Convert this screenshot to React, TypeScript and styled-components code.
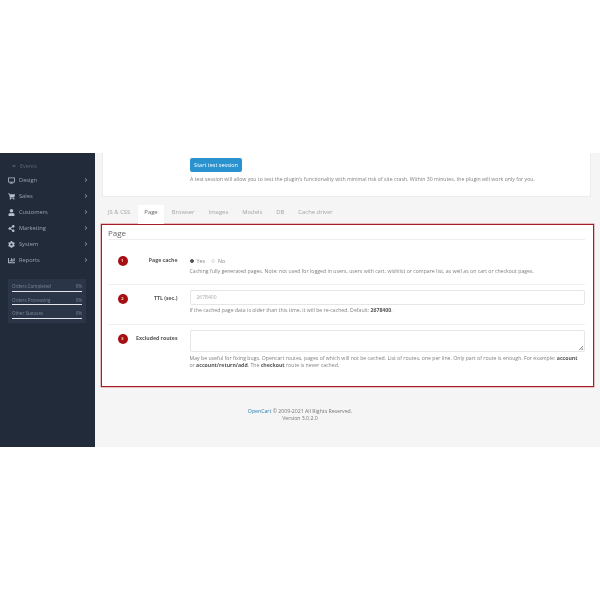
import React from 'react'
import styled, { createGlobalStyle } from 'styled-components'
import {
  FaAngleRight,
  FaAngleDoubleRight,
  FaDesktop,
  FaShoppingCart,
  FaUser,
  FaShareAlt,
  FaCog,
  FaChartBar,
} from 'react-icons/fa'

const GlobalStyle = createGlobalStyle`
  html, body {
    margin: 0;
    padding: 0;
    background: #fff;
    font-family: "Open Sans", "Liberation Sans", sans-serif;
  }
`

const Page = styled.div`
  width: 600px;
  height: 600px;
  padding-top: 153px;
  box-sizing: border-box;
  filter: blur(0.35px);
`

const Shell = styled.div`
  display: flex;
  height: 294px;
  background: #f5f5f5;
`

const Sidebar = styled.aside`
  width: 95px;
  flex: none;
  background: #212b39;
  padding-top: 7px;
  box-sizing: border-box;
`

const SubItem = styled.div`
  display: flex;
  align-items: center;
  height: 12px;
  padding-left: 12px;
  gap: 4px;
  color: #5a6776;
  font-size: 5.5px;
`

const MenuItem = styled.div`
  display: flex;
  align-items: center;
  height: 16px;
  padding: 0 6px 0 8px;
  color: #99a5b3;
  font-size: 5.7px;
`

const MenuIcon = styled.span`
  width: 11px;
  display: flex;
  font-size: 7px;
  color: #b4bfca;
`

const MenuLabel = styled.span`
  flex: 1;
`

const Chevron = styled(FaAngleRight)`
  color: #7b8794;
  font-size: 6px;
`

const Stats = styled.div`
  margin: 11px 9px 0 8px;
  height: 44px;
  padding: 2.5px 4px 0;
  box-sizing: border-box;
  background: #2a3647;
`

const Stat = styled.div`
  height: 13.5px;
`

const StatRow = styled.div`
  display: flex;
  justify-content: space-between;
  height: 9px;
  align-items: center;
  color: #7b8794;
  font-size: 4.5px;
`

const StatBar = styled.div`
  height: 1px;
  background: #e4e7ea;
`

const Main = styled.main`
  flex: 1;
  min-width: 0;
  padding: 0 6px;
`

const TestCard = styled.section`
  height: 44px;
  margin: 0 3px 0 1px;
  padding: 5px 0 0 87px;
  box-sizing: border-box;
  background: #fff;
  border: 1px solid #ececec;
  border-top: none;
`

const StartButton = styled.button`
  display: block;
  width: 52px;
  height: 14px;
  padding: 0;
  border: none;
  border-radius: 2px;
  background: #2a93cf;
  color: #fff;
  font-family: inherit;
  font-size: 5.5px;
`

const Help = styled.p`
  margin: 0;
  color: #7f7f7f;
  font-size: 5.2px;
  line-height: 7px;

  b {
    color: #555;
    font-weight: 700;
  }
`

const CardHelp = styled(Help)`
  margin-top: 4px;
`

const RoutesHelp = styled(Help)`
  padding-right: 6px;
`

const Tabs = styled.nav`
  display: flex;
  height: 19px;
  margin-top: 8px;
  padding-left: 1px;
`

const Tab = styled.span<{ $active?: boolean }>`
  height: 100%;
  box-sizing: border-box;
  padding: 3px 6px 0;
  margin-right: 2px;
  background: ${(p) => (p.$active ? '#fff' : 'transparent')};
  color: ${(p) => (p.$active ? '#666' : '#a5a5a5')};
  font-size: 5.9px;
  line-height: 9px;
`

const Panel = styled.section`
  height: 163px;
  padding: 1.5px 8px 0 6px;
  box-sizing: border-box;
  background: #fff;
  border: 1.5px solid #a51c22;
  box-shadow: 0 0 0 0.5px #d98a8d;
`

const PanelTitle = styled.h2`
  margin: 0;
  height: 13px;
  box-sizing: border-box;
  border-bottom: 1px solid #eee;
  color: #666;
  font-size: 8px;
  font-weight: 400;
  line-height: 11px;
`

const Row = styled.div<{ $height: number; $top: number; $fieldTop: number }>`
  display: flex;
  height: ${(p) => p.$height}px;
  box-sizing: border-box;
  padding-top: ${(p) => p.$top}px;
  border-bottom: 1px solid #f0f0f0;

  &:last-child {
    border-bottom: none;
  }

  > div:last-child {
    margin-top: ${(p) => p.$fieldTop - p.$top}px;
  }
`

const Badge = styled.span`
  width: 10px;
  height: 10px;
  flex: none;
  margin-left: 9.5px;
  border-radius: 50%;
  background: #a80f12;
  color: #f3d7d7;
  font-size: 4px;
  font-weight: 700;
  line-height: 10px;
  text-align: center;
`

const Label = styled.div`
  width: 50px;
  flex: none;
  color: #555;
  font-size: 5.2px;
  font-weight: 700;
  line-height: 8px;
  text-align: right;
  white-space: nowrap;
`

const Field = styled.div`
  flex: 1;
  min-width: 0;
  margin-left: 12px;
`

const Radios = styled.div`
  display: flex;
  align-items: center;
  height: 8px;
  margin-bottom: 3px;
  color: #888;
  font-size: 5.3px;
`

const Radio = styled.span<{ $checked?: boolean }>`
  width: 4px;
  height: 4px;
  margin-right: 3px;
  box-sizing: border-box;
  border-radius: 50%;
  border: 0.5px solid ${(p) => (p.$checked ? '#555' : '#ddd')};
  background: ${(p) => (p.$checked ? '#555' : '#fff')};
`

const RadioText = styled.span`
  margin-right: 6px;
`

const TextInput = styled.div`
  height: 15px;
  margin-bottom: 2px;
  padding-left: 6px;
  box-sizing: border-box;
  border: 1px solid #e6e6e6;
  border-radius: 2px;
  color: #aaa;
  font-size: 5px;
  line-height: 13px;
`

const TextArea = styled.div`
  height: 22px;
  margin-bottom: 3px;
  box-sizing: border-box;
  border: 1px solid #e6e6e6;
  border-radius: 2px;
  position: relative;

  &::after {
    content: '';
    position: absolute;
    right: 1px;
    bottom: 1px;
    width: 4px;
    height: 4px;
    background: linear-gradient(135deg, transparent 50%, #999 50%, #fff 65%, #999 80%);
  }
`

const Footer = styled.footer`
  margin-top: 21px;
  padding-right: 95px;
  color: #777;
  font-size: 5.2px;
  line-height: 7px;
  text-align: center;
`

const FooterLink = styled.span`
  color: #2a7fb0;
`

const menu = [
  { label: 'Design', icon: <FaDesktop /> },
  { label: 'Sales', icon: <FaShoppingCart /> },
  { label: 'Customers', icon: <FaUser /> },
  { label: 'Marketing', icon: <FaShareAlt /> },
  { label: 'System', icon: <FaCog /> },
  { label: 'Reports', icon: <FaChartBar /> },
]

const stats = ['Orders Completed', 'Orders Processing', 'Other Statuses']
const tabs = ['JS & CSS', 'Page', 'Browser', 'Images', 'Models', 'DB', 'Cache driver']

const App: React.FC = () => (
  <Page>
    <GlobalStyle />
    <Shell>
      <Sidebar>
        <SubItem>
          <FaAngleDoubleRight size={4} />
          Events
        </SubItem>
        {menu.map((item) => (
          <MenuItem key={item.label}>
            <MenuIcon>{item.icon}</MenuIcon>
            <MenuLabel>{item.label}</MenuLabel>
            <Chevron />
          </MenuItem>
        ))}
        <Stats>
          {stats.map((name) => (
            <Stat key={name}>
              <StatRow>
                <span>{name}</span>
                <span>0%</span>
              </StatRow>
              <StatBar />
            </Stat>
          ))}
        </Stats>
      </Sidebar>
      <Main>
        <TestCard>
          <StartButton>Start test session</StartButton>
          <CardHelp>
            A test session will allow you to test the plugin's functionality with minimal risk of
            site crash. Within 30 minutes, the plugin will work only for you.
          </CardHelp>
        </TestCard>
        <Tabs>
          {tabs.map((tab) => (
            <Tab key={tab} $active={tab === 'Page'}>
              {tab}
            </Tab>
          ))}
        </Tabs>
        <Panel>
          <PanelTitle>Page</PanelTitle>
          <Row $height={45} $top={16} $fieldTop={17}>
            <Badge>1</Badge>
            <Label>Page cache</Label>
            <Field>
              <Radios>
                <Radio $checked />
                <RadioText>Yes</RadioText>
                <Radio />
                <RadioText>No</RadioText>
              </Radios>
              <Help>
                Caching fully generated pages. Note: not used for logged in users, users with cart,
                wishlist or compare list, as well as on cart or checkout pages.
              </Help>
            </Field>
          </Row>
          <Row $height={40} $top={9} $fieldTop={5}>
            <Badge>2</Badge>
            <Label>TTL (sec.)</Label>
            <Field>
              <TextInput>2678400</TextInput>
              <Help>
                If the cached page data is older than this time, it will be re-cached. Default:{' '}
                <b>2678400</b>.
              </Help>
            </Field>
          </Row>
          <Row $height={60} $top={9} $fieldTop={5}>
            <Badge>3</Badge>
            <Label>Excluded routes</Label>
            <Field>
              <TextArea />
              <RoutesHelp>
                May be useful for fixing bugs. Opencart routes, pages of which will not be cached.
                List of routes, one per line. Only part of route is enough. For example:{' '}
                <b>account</b> or <b>account/return/add</b>. The <b>checkout</b> route is never
                cached.
              </RoutesHelp>
            </Field>
          </Row>
        </Panel>
        <Footer>
          <FooterLink>OpenCart</FooterLink> © 2009-2021 All Rights Reserved.
          <br />
          Version 3.0.2.0
        </Footer>
      </Main>
    </Shell>
  </Page>
)

export default App
